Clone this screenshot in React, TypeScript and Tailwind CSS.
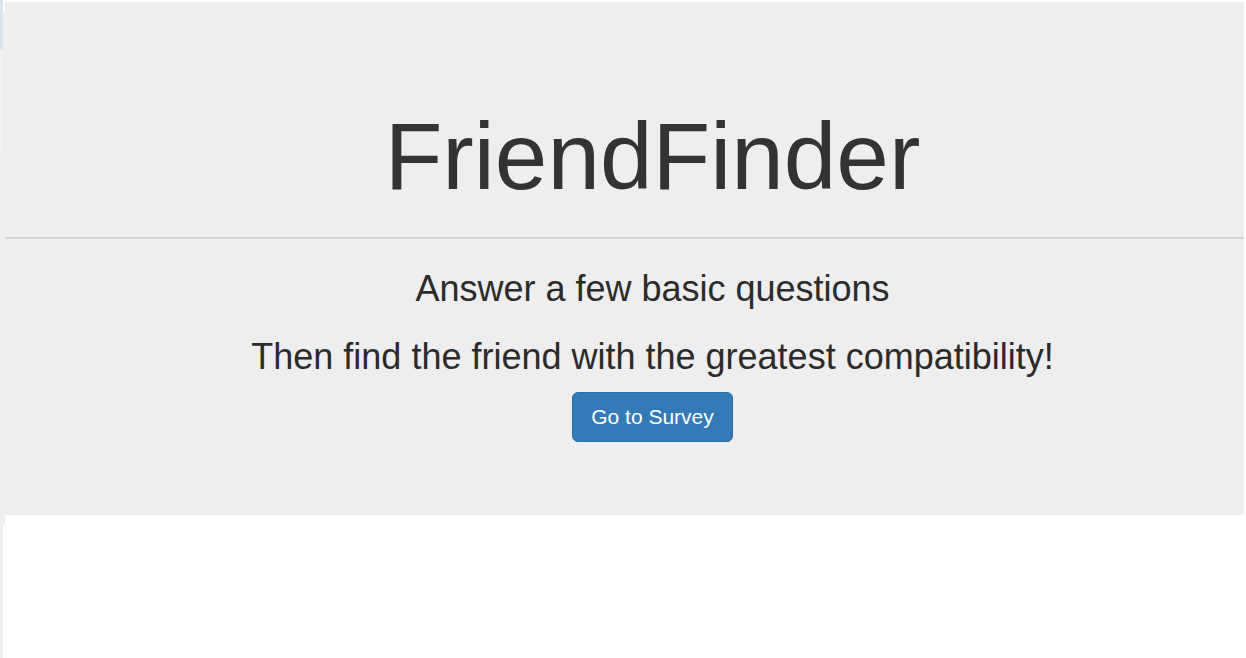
export default function App() {
  return (
    <div
      className="flex h-[658px] w-full overflow-hidden bg-white text-[#333]"
      style={{ fontFamily: '"Liberation Sans", Arial, Helvetica, sans-serif' }}
    >
      {/* left edge strips */}
      <div className="flex w-[3px] shrink-0 flex-col">
        <div className="h-[50px] bg-[#dee3ea]" />
        <div className="h-[103px] bg-[#f2f2f2]" />
        <div className="flex-1 bg-[#eeeeee]" />
      </div>
      <div className="flex w-[2px] shrink-0 flex-col">
        <div className="h-[12px] bg-white" />
        <div className="h-[513px] bg-[#eeeeee]" />
        <div className="flex-1 bg-white" />
      </div>

      <div className="flex flex-1 flex-col pr-[2px] pt-[2px]">
        <div className="flex h-[513px] flex-col items-center bg-[#eeeeee] pt-[102px]">
          <h1 className="ml-[56px] h-[104px] text-[94.5px] leading-[104px] text-[#333]">FriendFinder</h1>
          <hr className="mt-[29px] w-full border-0 border-t-2 border-[#d3d3d3]" />
          <h3 className="ml-[56px] mt-[30px] h-[40px] text-[36px] leading-[40px] text-[#2b2b2b]">
            Answer a few basic questions
          </h3>
          <h3 className="ml-[56px] mt-[28px] h-[40px] text-[36px] leading-[40px] text-[#2b2b2b]">
            Then find the friend with the greatest compatibility!
          </h3>
          <button className="ml-[56px] mt-[15px] h-[50px] rounded-[6px] border-[1.5px] border-[#2e6da4] bg-[#337ab7] px-[18px] text-[21px] text-white">
            Go to Survey
          </button>
        </div>
      </div>
    </div>
  );
}
